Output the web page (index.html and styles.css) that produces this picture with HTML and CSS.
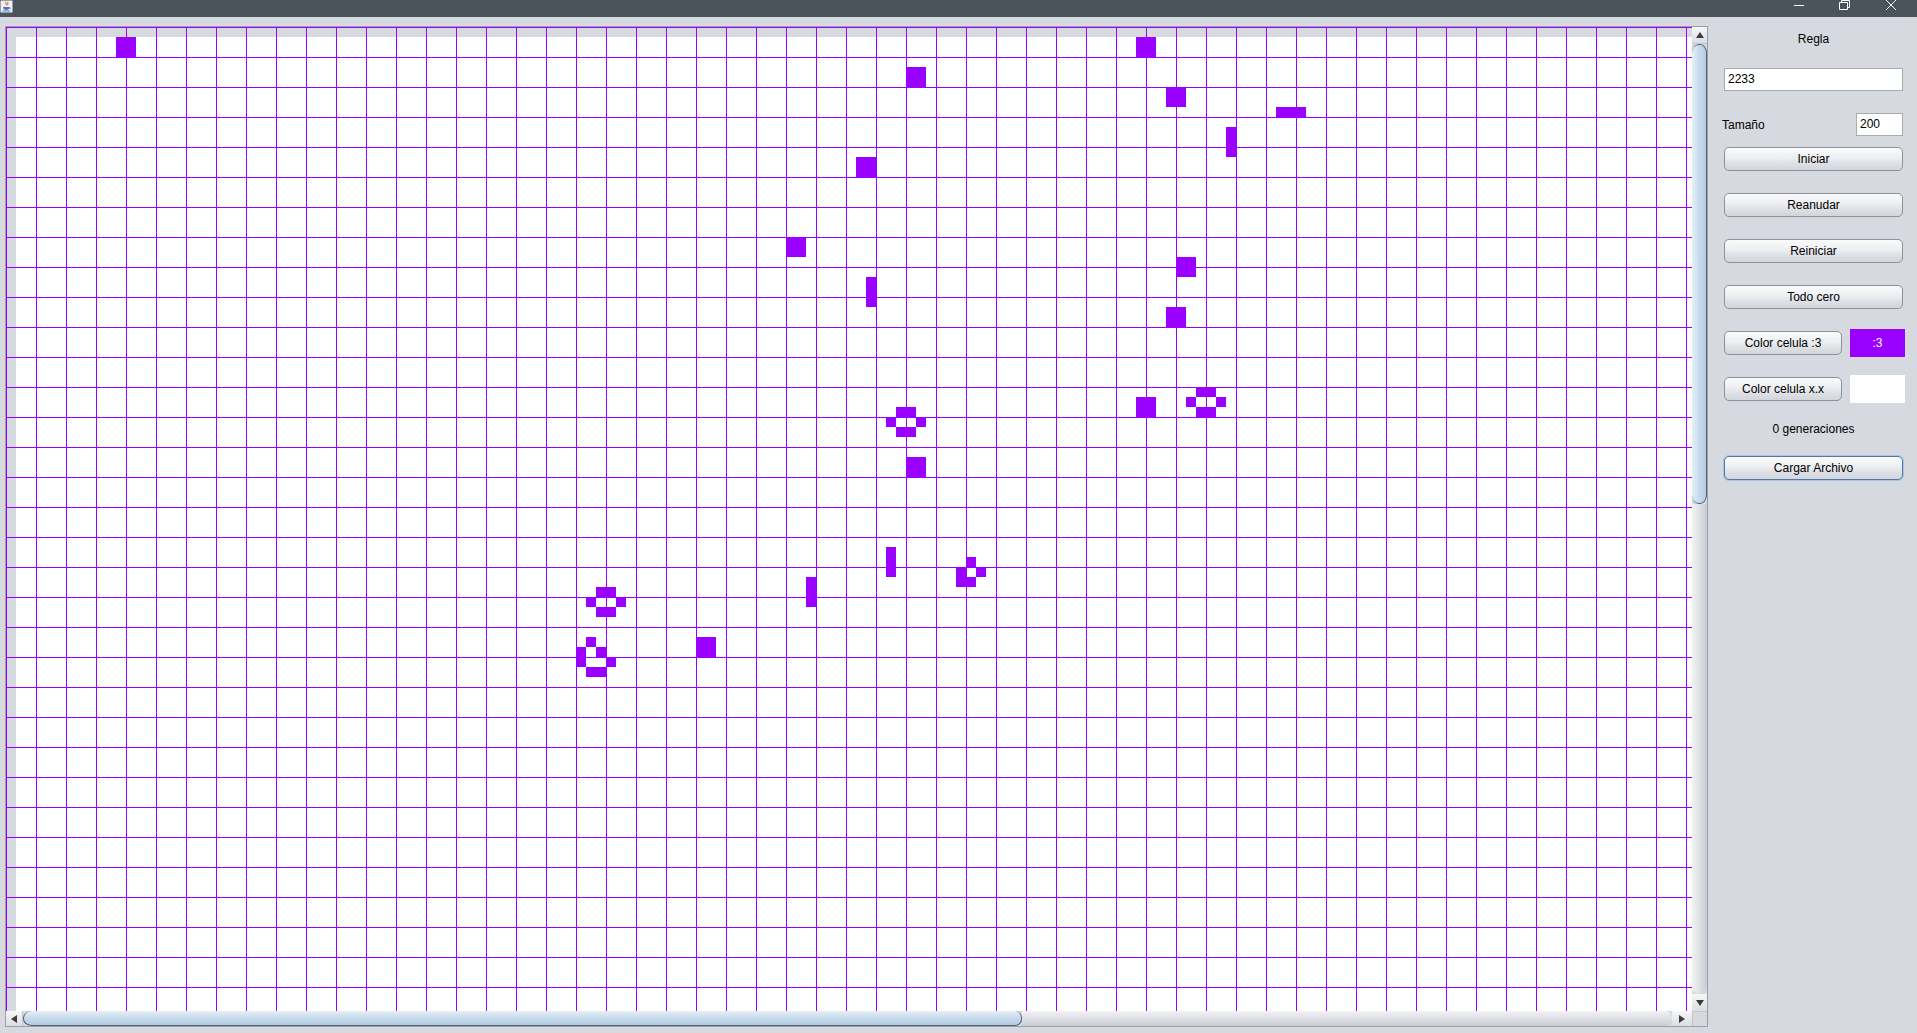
FILE: index.html
```html
<!DOCTYPE html>
<html lang="es">
<head>
<meta charset="utf-8">
<title>Juego de la vida</title>
<link rel="stylesheet" href="styles.css">
</head>
<body>
<div class="window">
  <div class="titlebar">
    <svg class="java-icon" width="13" height="13" viewBox="0 0 13 13">
      <rect x="0.5" y="0.5" width="12" height="12" rx="1" fill="#eef0f3" stroke="#9aa0a8"/>
      <path d="M6 1.5 C4.5 3 7.5 4 6 5.5 M8 2 C7 3 8.5 3.8 7.5 5" stroke="#e2562b" stroke-width="1" fill="none"/>
      <path d="M3 7 H9.5 Q9.5 10 6.2 10 Q3 10 3 7 Z" fill="#4a79b8"/>
      <path d="M9.5 7.5 Q11.5 7.8 9.6 9" stroke="#4a79b8" fill="none"/>
      <path d="M2.5 11 H10" stroke="#4a79b8"/>
    </svg>
    <div class="controls">
      <svg class="ctl" width="46" height="17" viewBox="0 0 46 17"><path d="M18 5.5 H28" stroke="#fff"/></svg>
      <svg class="ctl" width="46" height="17" viewBox="0 0 46 17"><path d="M17.5 2.5 H25.5 V9.5 H17.5 Z M19.5 2.5 V0.5 H27.5 V7.5 H25.5" stroke="#fff" fill="none"/></svg>
      <svg class="ctl" width="46" height="17" viewBox="0 0 46 17"><path d="M18 0 L28 10 M28 0 L18 10" stroke="#fff" fill="none"/></svg>
    </div>
  </div>
  <div class="content">
    <div class="scrollpane">
      <div class="sp-main">
        <div class="viewport">
          <svg class="grid" width="1686" height="984" viewBox="0 0 1686 984">
            <defs>
              <pattern id="lines" width="30" height="30" patternUnits="userSpaceOnUse">
                <path d="M0 0.5 H30 M0.5 0 V30" stroke="#9900ff" stroke-width="1" fill="none"/>
              </pattern>
            </defs>
            <rect x="0" y="0" width="1686" height="984" fill="#ffffff"/>
            <rect x="0" y="0" width="10" height="984" fill="#d6d9df"/>
            <rect x="0" y="0" width="1686" height="10" fill="#d6d9df"/>
            <rect x="0" y="0" width="1686" height="984" fill="url(#lines)"/>
            <g fill="#9900ff">
              <rect x="110" y="10" width="20" height="20"/>
              <rect x="900" y="40" width="20" height="20"/>
              <rect x="1130" y="10" width="20" height="20"/>
              <rect x="1160" y="60" width="20" height="20"/>
              <rect x="1270" y="80" width="30" height="10"/>
              <rect x="1220" y="100" width="10" height="30"/>
              <rect x="850" y="130" width="20" height="20"/>
              <rect x="780" y="210" width="20" height="20"/>
              <rect x="860" y="250" width="10" height="30"/>
              <rect x="1170" y="230" width="20" height="20"/>
              <rect x="1160" y="280" width="20" height="20"/>
              <rect x="1130" y="370" width="20" height="20"/>
              <rect x="1190" y="360" width="20" height="10"/>
              <rect x="1180" y="370" width="10" height="10"/>
              <rect x="1210" y="370" width="10" height="10"/>
              <rect x="1190" y="380" width="20" height="10"/>
              <rect x="890" y="380" width="20" height="10"/>
              <rect x="880" y="390" width="10" height="10"/>
              <rect x="910" y="390" width="10" height="10"/>
              <rect x="890" y="400" width="20" height="10"/>
              <rect x="900" y="430" width="20" height="20"/>
              <rect x="880" y="520" width="10" height="30"/>
              <rect x="800" y="550" width="10" height="30"/>
              <rect x="960" y="530" width="10" height="10"/>
              <rect x="950" y="540" width="10" height="10"/>
              <rect x="970" y="540" width="10" height="10"/>
              <rect x="950" y="550" width="20" height="10"/>
              <rect x="590" y="560" width="20" height="10"/>
              <rect x="580" y="570" width="10" height="10"/>
              <rect x="610" y="570" width="10" height="10"/>
              <rect x="590" y="580" width="20" height="10"/>
              <rect x="580" y="610" width="10" height="10"/>
              <rect x="570" y="620" width="10" height="10"/>
              <rect x="590" y="620" width="10" height="10"/>
              <rect x="570" y="630" width="10" height="10"/>
              <rect x="600" y="630" width="10" height="10"/>
              <rect x="580" y="640" width="20" height="10"/>
              <rect x="690" y="610" width="20" height="20"/>
            </g>
          </svg>
        </div>
        <div class="vscroll">
          <div class="sb-btn sb-up"><span class="tri tri-up"></span></div>
          <div class="sb-thumb-v"></div>
          <div class="sb-track-v"></div>
          <div class="sb-btn sb-down"><span class="tri tri-down"></span></div>
        </div>
      </div>
      <div class="sp-bottom">
        <div class="hscroll">
          <div class="sb-btn sb-left"><span class="tri tri-left"></span></div>
          <div class="sb-thumb-h"></div>
          <div class="sb-track-h"></div>
          <div class="sb-btn sb-right"><span class="tri tri-right"></span></div>
        </div>
        <div class="corner"></div>
      </div>
    </div>
    <div class="panel">
      <div class="label label-regla">Regla</div>
      <div class="field field-regla">2233</div>
      <div class="row row-size">
        <span class="label-size">Tamaño</span>
        <div class="field field-size">200</div>
      </div>
      <div class="btn btn-first">Iniciar</div>
      <div class="btn">Reanudar</div>
      <div class="btn">Reiniciar</div>
      <div class="btn">Todo cero</div>
      <div class="row row-color row-color-first">
        <div class="btn btn-color">Color celula :3</div>
        <div class="swatch swatch-purple">:3</div>
      </div>
      <div class="row row-color">
        <div class="btn btn-color">Color celula x.x</div>
        <div class="swatch swatch-white"></div>
      </div>
      <div class="label label-gen">0 generaciones</div>
      <div class="btn btn-focus">Cargar Archivo</div>
    </div>
  </div>
</div>
</body>
</html>
```

FILE: styles.css
```css
* { box-sizing: border-box; }
html, body {
  margin: 0;
  padding: 0;
  width: 1917px;
  height: 1033px;
  overflow: hidden;
  background: #d6d9df;
  font-family: "Liberation Sans", Arial, sans-serif;
  font-size: 12px;
  color: #000;
}
.window {
  width: 1917px;
  height: 1033px;
  display: flex;
  flex-direction: column;
}
.titlebar {
  height: 17px;
  background: #4b535b;
  display: flex;
  align-items: flex-start;
  justify-content: space-between;
  flex: none;
}
.java-icon { display: block; margin-left: 0; }
.controls { display: flex; margin-right: 3px; }
.ctl { display: block; }

.content {
  flex: 1;
  display: flex;
  align-items: flex-start;
}
.scrollpane {
  margin-left: 5px;
  margin-top: 9px;
  width: 1703px;
  height: 1001px;
  border: 1px solid #9ba0a8;
  display: flex;
  flex-direction: column;
  flex: none;
}
.sp-main { display: flex; height: 984px; }
.viewport { width: 1686px; height: 984px; overflow: hidden; }
.grid { display: block; }

.vscroll {
  width: 15px;
  height: 984px;
  display: flex;
  flex-direction: column;
  background: #d6d9df;
}
.sb-btn {
  flex: none;
  display: flex;
  align-items: center;
  justify-content: center;
  background: linear-gradient(to bottom, #f6f7f8, #dadde2);
}
.sb-up { height: 17px; border-bottom: 1px solid #c3c7cd; }
.sb-down { height: 17px; margin-top: auto; }
.sb-left { width: 17px; border-right: 1px solid #c3c7cd; }
.sb-right { width: 20px; }
.tri { width: 0; height: 0; border-style: solid; }
.tri-up { border-width: 0 4px 6px 4px; border-color: transparent transparent #3c3c3c transparent; }
.tri-down { border-width: 6px 4px 0 4px; border-color: #3c3c3c transparent transparent transparent; }
.tri-left { border-width: 4px 6px 4px 0; border-color: transparent #3c3c3c transparent transparent; }
.tri-right { border-width: 4px 0 4px 6px; border-color: transparent transparent transparent #3c3c3c; }

.sb-thumb-v {
  height: 460px;
  flex: none;
  border: 1px solid #4e6275;
  border-left: none;
  border-radius: 7px 7px 7px 7px / 9px 9px 9px 9px;
  background: linear-gradient(to right, #e8f0f7, #c9dced 45%, #b3cce2);
}
.sb-track-v {
  flex: 1;
  background: linear-gradient(to right, #f2f3f5, #c9ccd2);
  border-radius: 0 0 7px 7px;
}

.sp-bottom { display: flex; height: 15px; }
.hscroll {
  width: 1686px;
  display: flex;
  background: #d6d9df;
}
.sb-thumb-h {
  width: 999px;
  flex: none;
  border: 1px solid #4e6275;
  border-top: none;
  border-radius: 9px 7px 7px 9px / 7px 7px 7px 7px;
  background: linear-gradient(to bottom, #e8f0f7, #c9dced 45%, #b3cce2);
}
.sb-track-h {
  flex: 1;
  background: linear-gradient(to bottom, #f2f3f5, #c9ccd2);
  border-radius: 0 7px 7px 0;
}
.corner { width: 15px; background: #d6d9df; border-left: 1px solid #c3c7cd; border-top: 1px solid #c3c7cd; }

.panel {
  flex: 1;
  display: flex;
  flex-direction: column;
  padding-left: 16px;
  padding-right: 14px;
}
.label {
  height: 16px;
  line-height: 16px;
  text-align: center;
}
.label-regla { margin-top: 14px; }
.field {
  height: 23px;
  line-height: 21px;
  background: #fff;
  border: 1px solid #a7abb2;
  padding-left: 3px;
}
.field-regla { margin-top: 21px; }
.row { display: flex; align-items: center; }
.row-size { margin-top: 22px; height: 23px; justify-content: space-between; }
.label-size { margin-left: -2px; }
.field-size { width: 47px; }

.btn {
  height: 24px;
  margin-top: 22px;
  border: 1px solid #8c939c;
  border-radius: 5px;
  background: linear-gradient(to bottom, #fbfbfc 0%, #eceef1 45%, #dde0e5 70%, #d2d6dc 100%);
  text-align: center;
  line-height: 22px;
  flex: none;
}
.btn-first { margin-top: 11px; }
.row-color { height: 28px; margin-top: 18px; margin-right: -2px; }
.row-color-first { margin-top: 20px; }
.row-color .btn { margin-top: 0; width: 118px; }
.swatch {
  width: 55px;
  height: 28px;
  margin-left: 8px;
  text-align: center;
  line-height: 28px;
}
.swatch-purple { background: #9900ff; color: #fff; }
.swatch-white { background: #fff; }
.label-gen { margin-top: 18px; }
.btn-focus {
  margin-top: 19px;
  border-color: #4f79a6;
  box-shadow: 0 0 0 1px #a9c4e0;
}
```
